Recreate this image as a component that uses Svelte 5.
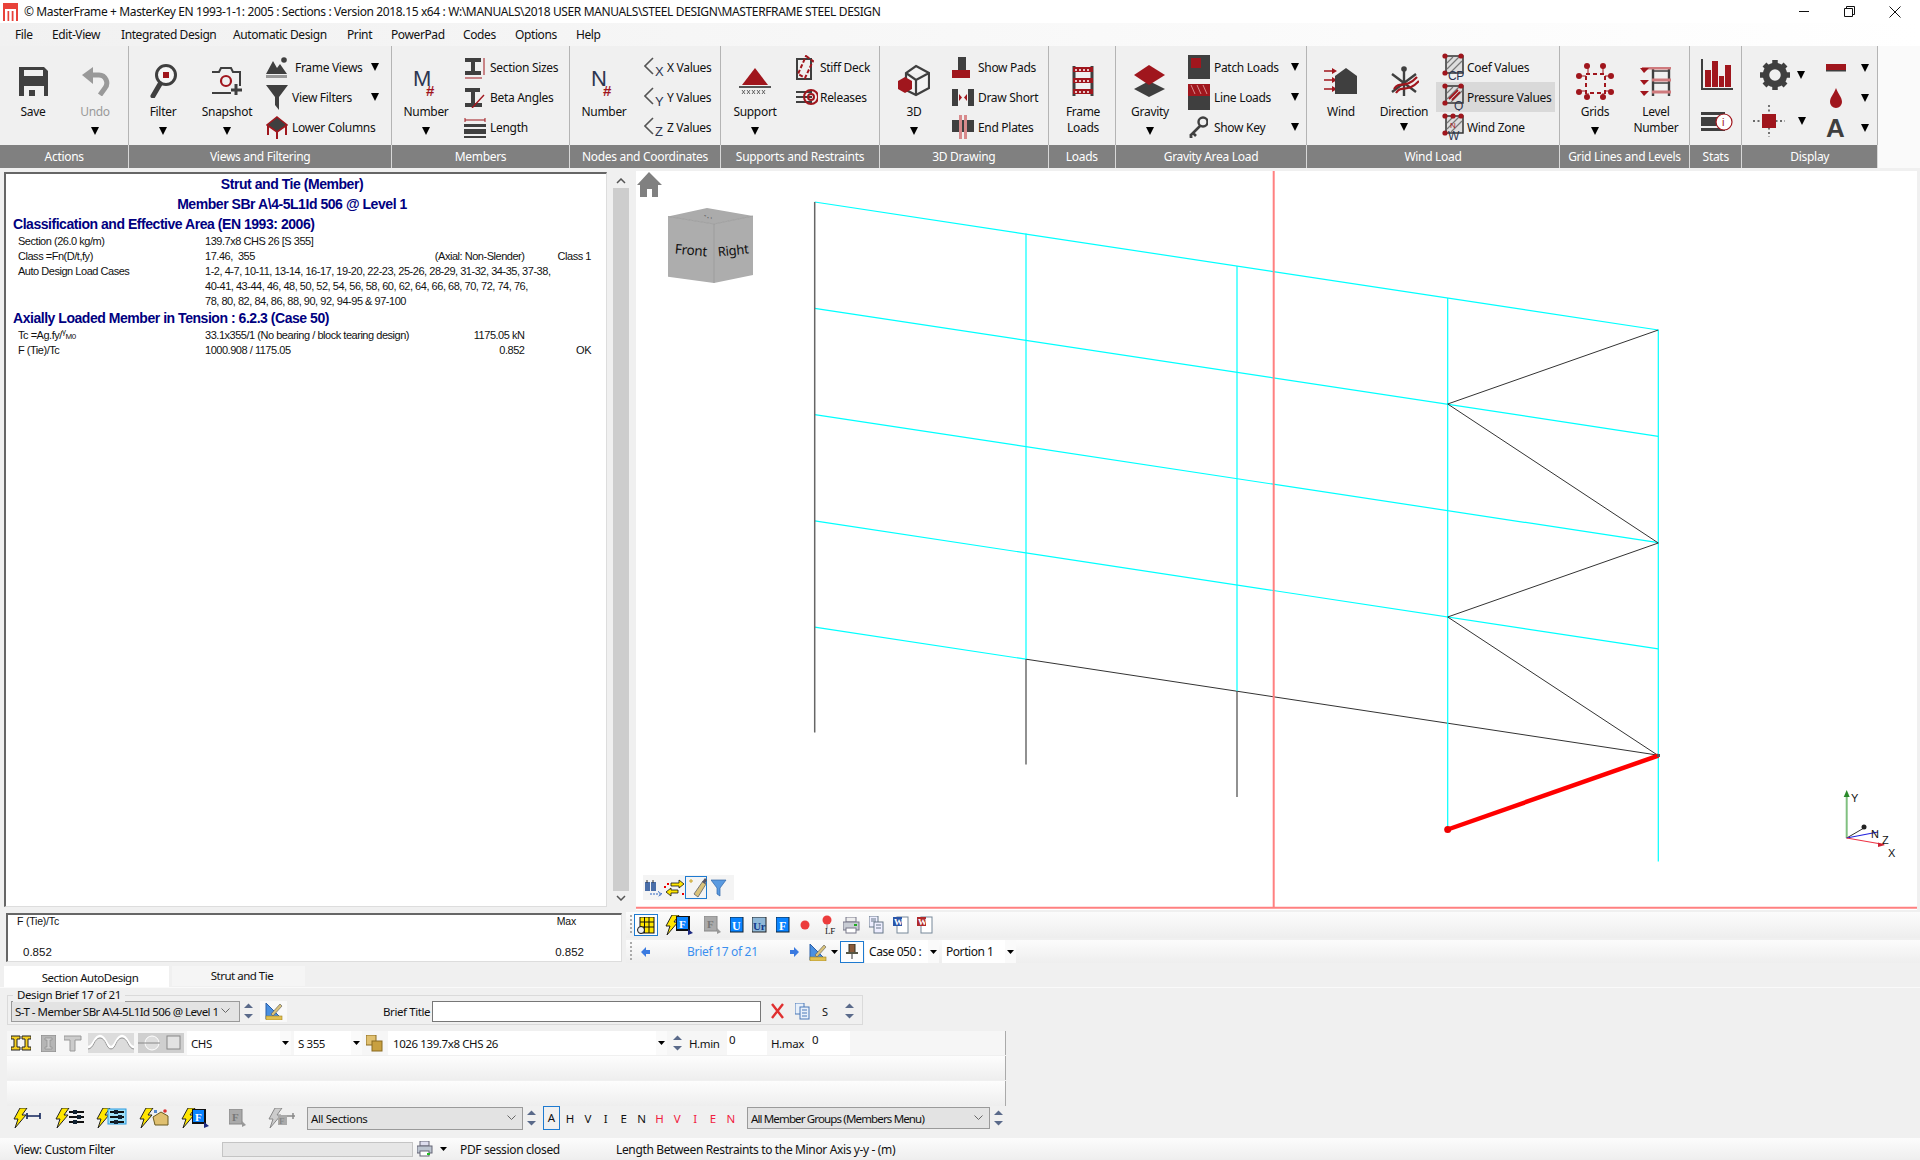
<script>
const R='#a0161d', D='#3f3f3f', F='font-family="Liberation Sans" ';
const bolt=(x=0,y=0)=>`<polygon transform="translate(${x} ${y})" points="8,0 15,0 10,7 14,7 3,20 6,11 2,11" fill="#ffe600" stroke="#222" stroke-width="1"/>`;
const hatch=`<rect x="4" y="3" width="17" height="17" fill="#ddd" stroke="#333" stroke-width="1.5"/><path d="M5 10L11 4M5 16L17 4M9 19L20 8" stroke="#777" stroke-width="1.2"/>`;
const dots=`<circle cx="3" cy="3" r="2.6" fill="${R}"/><circle cx="19" cy="3" r="2.6" fill="${R}"/><circle cx="3" cy="20" r="2.6" fill="${R}"/>`;
const axis=(l)=>`<path d="M9 2L1 10L9 18" fill="none" stroke="#555" stroke-width="1.6"/><text x="11" y="20" ${F}font-size="13" fill="#2d3650">${l}</text>`;
const ICONS={
save:`<path d="M0 0H25L29 4V29H0Z" fill="#404040"/><rect x="5" y="3" width="19" height="6" fill="#f0f0f0"/><rect x="5" y="19" width="20" height="10" fill="#f0f0f0"/><rect x="10" y="23" width="6" height="6" fill="#404040"/>`,
undo:`<path d="M11 8H18a8 8 0 0 1 6 13L19 28" fill="none" stroke="#999" stroke-width="5"/><path d="M12 0V17L1 8Z" fill="#999"/>`,
filter:`<circle cx="17" cy="11" r="9.5" fill="#f6f6f6" stroke="${D}" stroke-width="3"/><rect x="14" y="8" width="6" height="6" fill="${R}"/><path d="M11 20L4 32" stroke="${D}" stroke-width="5" stroke-linecap="round"/>`,
snapshot:`<path d="M1 5H8L10 1H20L22 5H29V19M20 26H1Z" fill="none" stroke="${D}" stroke-width="2"/><circle cx="15" cy="14" r="5" fill="none" stroke="${R}" stroke-width="2.2"/><path d="M25 17V28M20 23H31" stroke="${D}" stroke-width="3"/>`,
frame:`<path d="M0 17L7 4L11 11L14 7L21 17Z" fill="${D}"/><circle cx="18" cy="3" r="2.8" fill="${D}"/><rect y="18" width="21" height="3" fill="#999"/>`,
funnel:`<polygon points="0,0 22,0 13,12 13,25 9,20 9,12" fill="${D}"/>`,
lower:`<polygon points="11,1 21,9 11,16 1,9" fill="${D}" stroke="${R}" stroke-width="1.6"/><path d="M2 10V19M20 10V19M11 16V23" stroke="${R}" stroke-width="2"/>`,
mnum:`<text x="1" y="21" ${F}font-size="22" fill="#2d3650">M</text><text x="14" y="31" ${F}font-size="15" font-weight="700" fill="${R}">#</text>`,
nnum:`<text x="1" y="21" ${F}font-size="22" fill="#2d3650">N</text><text x="13" y="31" ${F}font-size="15" font-weight="700" fill="${R}">#</text>`,
sect:`<path d="M1 3H17V7H11V16H17V20H1V16H7V7H1Z" fill="${D}"/><path d="M20 3V20M1 23H18" stroke="${R}" stroke-width="1"/>`,
beta:`<path d="M1 1H16V5H11V16H18V20H1V16H7V5H1Z" fill="${D}"/><path d="M8 21L20 8" stroke="${R}" stroke-width="1.4"/>`,
len:`<path d="M1 3H21M1 1V5M21 1V5" stroke="${R}" stroke-width="1"/><rect y="7" width="22" height="3" fill="${D}"/><rect y="12" width="22" height="5" fill="${D}"/><rect y="19" width="22" height="2" fill="${D}"/>`,
xv:axis('X'),yv:axis('Y'),zv:axis('Z'),
support:`<polygon points="16,0 29,17 3,17" fill="${R}"/><rect y="18" width="32" height="2" fill="#555"/><path d="M3 22l3 4m0-4l-3 4M8 22l3 4m0-4l-3 4M13 22l3 4m0-4l-3 4M18 22l3 4m0-4l-3 4M23 22l3 4m0-4l-3 4" stroke="#555" stroke-width=".9"/>`,
stiff:`<rect x="1" y="4" width="14" height="20" fill="none" stroke="${D}" stroke-width="2"/><path d="M10 1L17 6L9 23L2 19Z" fill="none" stroke="${R}" stroke-width="2" stroke-dasharray="4 2"/>`,
rel:`<path d="M0 5H16M0 10H16M0 15H16" stroke="${D}" stroke-width="2"/><circle cx="15" cy="10" r="7" fill="none" stroke="${R}" stroke-width="2"/><circle cx="15" cy="10" r="3" fill="none" stroke="${R}" stroke-width="2"/>`,
cube:`<path d="M18 2L31 9V24L18 31L8 26V9Z M8 9L18 16L31 9M18 16V31" fill="#f4f4f4" stroke="${D}" stroke-width="2.2"/><polygon points="7,13 14,17 14,25 7,29 0,25 0,17" fill="${R}"/>`,
pads:`<rect x="6" y="0" width="8" height="13" fill="${D}"/><rect y="13" width="18" height="8" fill="${R}"/>`,
short:`<rect y="0" width="6" height="17" fill="${D}"/><rect x="16" y="0" width="6" height="17" fill="${D}"/><path d="M10 8.5L7 5V12ZM12 8.5L15 5V12Z" fill="${R}"/>`,
plates:`<rect y="5" width="22" height="12" fill="${D}"/><rect x="7" y="0" width="3" height="24" fill="#d88a8c"/><rect x="12" y="0" width="3" height="24" fill="#d88a8c"/>`,
floads:`<path d="M2 0V30M20 0V30" stroke="${D}" stroke-width="3"/><rect x="1" y="1" width="20" height="5" fill="${R}"/><rect x="1" y="12" width="20" height="5" fill="${R}"/><rect x="1" y="23" width="20" height="5" fill="${R}"/><path d="M3 4H19M3 15H19M3 26H19" stroke="#fff" stroke-width="1.4" stroke-dasharray="2 2"/>`,
gravity:`<polygon points="15,16 31,24 15,32 0,24" fill="${D}"/><polygon points="15,0 31,10 15,20 0,10" fill="${R}"/>`,
patch:`<rect width="22" height="24" fill="${D}"/><rect x="3" y="3" width="10" height="10" fill="${R}"/>`,
lineload:`<rect width="22" height="26" fill="${D}"/><rect width="22" height="12" fill="${R}"/><path d="M3 1l4 9M9 1l4 9M15 1l4 9" stroke="#d88a8c"/>`,
key:`<circle cx="15" cy="6" r="4.5" fill="none" stroke="${D}" stroke-width="2.4"/><path d="M12 10L2 20M5 17L8 20M2 20L4 22" stroke="${D}" stroke-width="2.6"/>`,
wind:`<path d="M0 3H9M0 12H9M0 21H9" stroke="${R}" stroke-width="1.6"/><path d="M8 0L13 3L8 6ZM8 9L13 12L8 15ZM8 18L13 21L8 24Z" fill="${R}"/><path d="M11 8L22 0L33 8V26H11Z" fill="${D}" transform="translate(0 0)"/>`,
dirn:`<path d="M15 2V30M3 8L27 26M27 8L3 26" stroke="${D}" stroke-width="2.4"/><circle cx="15" cy="3" r="2.8" fill="${D}"/><path d="M5 23C11 14 16 24 28 11M7 27C13 18 18 28 30 15" fill="none" stroke="${R}" stroke-width="2.2"/>`,
cp:hatch+dots+`<text x="6" y="27" ${F}font-size="12" fill="#2d3650">CP</text>`,
q:hatch+dots+`<path d="M7 16L16 7M10 17L18 9" stroke="${R}" stroke-width="1.8"/><text x="12" y="27" ${F}font-size="12" fill="#2d3650">Q</text>`,
wz:hatch+dots+`<circle cx="11" cy="3" r="2.6" fill="${R}"/><text x="8" y="15" ${F}font-size="8" fill="${R}">N</text><text x="6" y="27" ${F}font-size="12" fill="#2d3650">W</text>`,
grids:`<path d="M12 4V33M27 4V33M1 13H37M1 28H37" stroke="${R}" stroke-width="1"/><rect x="10" y="11" width="19" height="19" fill="#f0f0f0" stroke="${R}" stroke-width="2" stroke-dasharray="4 3"/><g fill="${R}"><circle cx="11" cy="3" r="3"/><circle cx="27" cy="3" r="3"/><circle cx="3" cy="13" r="3"/><circle cx="35" cy="13" r="3"/><circle cx="3" cy="29" r="3"/><circle cx="35" cy="29" r="3"/><circle cx="11" cy="34" r="3"/><circle cx="27" cy="34" r="3"/></g>`,
level:`<path d="M13 1V29M29 1V29" stroke="${D}" stroke-width="2.4"/><path d="M2 1H31M12 13H31M12 25H31" stroke="#cf7a7d" stroke-width="3"/><path d="M12 4H29M12 16H29" stroke="${D}" stroke-width="1.4"/><path d="M0 1L9 1L4 6ZM0 13H9L4 18ZM0 24H9L4 29Z" fill="${R}"/>`,
bars:`<path d="M1 0V30H32" fill="none" stroke="${D}" stroke-width="2"/><g fill="${R}"><rect x="4" y="11" width="6" height="17"/><rect x="11" y="2" width="6" height="26"/><rect x="18" y="17" width="5" height="11"/><rect x="24" y="6" width="6" height="22"/></g>`,
info:`<rect y="1" width="24" height="3" fill="${D}"/><rect y="6" width="24" height="9" fill="${D}"/><rect y="17" width="24" height="3" fill="${D}"/><circle cx="23" cy="11" r="8" fill="#fff" stroke="${R}" stroke-width="1.2"/><text x="21" y="15" ${F}font-size="11" fill="${R}">i</text>`,
gear:`<circle cx="15" cy="15" r="9" fill="none" stroke="${D}" stroke-width="6.5"/><path d="M15 0V30M0 15H30M4.500 4.500L25.500 25.500M25.500 4.500L4.500 25.500" stroke="${D}" stroke-width="5.500" stroke-dasharray="4.500 21 4.500 0"/>`,
dash:`<rect y="0" width="20" height="7" fill="${R}"/><rect y="6" width="20" height="1.500" fill="${D}"/>`,
drop:`<path d="M6 0C8 6 12 9 12 14A6 6 0 0 1 0 14C0 9 4 6 6 0Z" fill="${R}"/>`,
move:`<path d="M16 0V32M0 16H32" stroke="${D}" stroke-width="1.4" stroke-dasharray="2 2.500"/><rect x="9" y="9" width="14" height="14" fill="${R}"/>`,
bigA:`<text x="0" y="19" ${F}font-size="26" font-weight="700" fill="${D}">A</text>`,
home:`<path d="M12 0L25 13H21V25H15V17H10V25H3V13H0Z" fill="#808080"/>`,
binoc:`<rect x="1" y="4" width="5" height="9" fill="#4a6ea8"/><rect x="7" y="4" width="5" height="9" fill="#4a6ea8"/><path d="M3 2V5M9 2V5" stroke="#333"/><path d="M6 16H17M14 13.500L18 16L14 18.500" stroke="#2e64c0" stroke-dasharray="2 1" fill="none"/>`,
swap:`<path d="M7 5H15V2L20 6L15 10V8H7Z" fill="#ffe600" stroke="#111" stroke-width=".8"/><path d="M14 12H7V10L2 14L7 18V15H14Z" fill="#ffe600" stroke="#111" stroke-width=".8"/><g fill="#e00"><rect x="0" y="8" width="2" height="2"/><rect x="3" y="5" width="2" height="2"/><rect x="18" y="15" width="2" height="2"/></g>`,
brush:`<path d="M8 17L17 4L20 7L12 20Z" fill="#d9c27a" stroke="#777"/><path d="M16 5L19 1L21 3L19 7Z" fill="#556"/><path d="M3 4H7M5 2V6" stroke="#c9a21e"/>`,
fnl:`<polygon points="0,1 15,1 9,9 9,17 6,15 6,9" fill="#5a9ae0" stroke="#2e64a8" stroke-width=".7"/>`,
grid:`<rect x="3" y="0" width="14" height="16" fill="#ffe600" stroke="#111" stroke-width="1"/><path d="M3 5H17M3 10H17M7.500 0V16M12 0V16" stroke="#111"/><circle cx="4" cy="13" r="3.500" fill="#eee" stroke="#111"/>`,
boltf:bolt(0,0)+`<rect x="12" y="1" width="14" height="15" fill="#111"/><rect x="13" y="2" width="11" height="12" fill="#0a84ff"/><text x="15" y="12.500" font-family="Liberation Serif" font-weight="700" font-size="11" fill="#fff">F</text><polygon points="24,14 29,18 24,20" fill="#1d2a80"/>`,
fgray:`<rect width="13" height="15" fill="#aaa" stroke="#888"/><text x="3" y="12" font-family="Liberation Serif" font-weight="700" font-size="11" fill="#777">F</text><polygon points="13,12 17,16 13,18" fill="#999"/>`,
u:`<rect width="13" height="15" fill="#0a84ff" stroke="#123"/><text x="2" y="12.500" font-family="Liberation Serif" font-weight="700" font-size="12" fill="#fff">U</text>`,
ur:`<rect width="14" height="15" fill="#8fb8d8" stroke="#222"/><text x="1" y="12.500" font-family="Liberation Serif" font-weight="700" font-size="11" fill="#123a8a">Ur</text>`,
f:`<rect width="13" height="15" fill="#0a84ff" stroke="#123"/><text x="3" y="12.500" font-family="Liberation Serif" font-weight="700" font-size="12" fill="#fff">F</text>`,
dot:`<circle cx="5" cy="5" r="4.500" fill="#ec3c3c"/>`,
pinlf:`<circle cx="5" cy="5" r="4.500" fill="#ec3c3c"/><path d="M5 9V13" stroke="#888"/><text x="3" y="18.500" font-family="Liberation Serif" font-size="9" fill="#111">LF</text>`,
print:`<rect x="3" y="0" width="10" height="5" fill="#eee" stroke="#778"/><rect x="0" y="5" width="16" height="8" fill="#c8ccd4" stroke="#778"/><rect x="3" y="11" width="10" height="5" fill="#fff" stroke="#778"/><rect x="11" y="7" width="3" height="2" fill="#2a2"/>`,
copies:`<rect x="0" y="0" width="9" height="11" fill="#eef" stroke="#678"/><rect x="5" y="6" width="9" height="11" fill="#eef" stroke="#678"/><path d="M2 3H7M2 5H7M7 9H12M7 12H12" stroke="#678"/>`,
wordb:`<rect x="4" y="1" width="11" height="16" fill="#fff" stroke="#789"/><rect x="0" y="1" width="9" height="9" fill="#2a55a8"/><text x="1" y="9" font-family="Liberation Serif" font-weight="700" font-size="9" fill="#fff">W</text>`,
wordr:`<rect x="4" y="1" width="11" height="16" fill="#fff" stroke="#789"/><rect x="0" y="1" width="9" height="9" fill="#b02a2a"/><text x="1" y="9" font-family="Liberation Serif" font-weight="700" font-size="9" fill="#fff">W</text>`,
la:`<polygon points="0,5 5,0 5,3 9,3 9,7 5,7 5,10" fill="#3a7ae0"/>`,
ra:`<polygon points="9,5 4,0 4,3 0,3 0,7 4,7 4,10" fill="#3a7ae0"/>`,
ruler:`<polygon points="1,1 1,17 17,17" fill="#4a90e0" stroke="#2a5ea8"/><rect x="1" y="14" width="16" height="4" fill="#e0c050" stroke="#a08020" stroke-width=".6"/><path d="M6 12L15 2L17 4L8 14Z" fill="#d9c27a" stroke="#555" stroke-width=".6"/>`,
pin:`<rect x="3" y="0" width="6" height="9" fill="#8a5a3a" stroke="#332"/><rect x="0" y="8" width="12" height="2" fill="#554"/><path d="M6 10V15" stroke="#333"/>`,
x:`<path d="M1 1L12 15M12 1L1 15" stroke="#e03030" stroke-width="2.400"/>`,
copy:`<rect x="0" y="0" width="9" height="11" fill="#e8f0fa" stroke="#4a78b8"/><rect x="5" y="4" width="9" height="12" fill="#e8f0fa" stroke="#4a78b8"/><path d="M7 7H12M7 10H12M7 13H12" stroke="#4a78b8"/>`,
ii:`<g fill="#f7d020" stroke="#222" stroke-width="1"><path d="M0 1H9V4H6V12H9V15H0V12H3V4H0Z"/><path d="M11 1H20V4H17V12H20V15H11V12H14V4H11Z"/></g>`,
ibox:`<rect width="15" height="17" fill="#b5b5b5" stroke="#888"/><path d="M4 3H11V5H9V12H11V14H4V12H6V5H4Z" fill="#ccc" stroke="#888" stroke-width=".6"/>`,
tbox:`<path d="M0 1H17V5H11V16H6V5H0Z" fill="#ccc" stroke="#999"/>`,
wave:`<rect width="46" height="20" fill="#dcdcdc"/><path d="M0 14C6 14 6 3 12 3C18 3 18 14 23 14C28 14 28 3 34 3C40 3 40 14 46 14" fill="none" stroke="#fff" stroke-width="2.400"/><path d="M0 16C6 16 6 5 12 5C18 5 18 16 23 16C28 16 28 5 34 5C40 5 40 16 46 16" fill="none" stroke="#999" stroke-width="1"/>`,
circbox:`<rect width="46" height="20" fill="#cfcfcf"/><circle cx="14" cy="10" r="7" fill="#ddd" stroke="#fff"/><path d="M0 10H22" stroke="#888"/><rect x="29" y="3" width="13" height="13" fill="#e2e2e2" stroke="#888"/>`,
stack:`<rect x="0" y="0" width="10" height="10" fill="#e0c070" stroke="#8a6a20"/><rect x="6" y="6" width="10" height="10" fill="#c8a040" stroke="#8a6a20"/>`,
bl1:bolt(0,0)+`<path d="M15 8H28M15 5V11M28 5V11" stroke="#11235a" stroke-width="1.600"/>`,
bl2:bolt(0,0)+`<path d="M15 4H30M15 9H30M15 14H30" stroke="#111" stroke-width="1.800"/><rect x="19" y="2" width="4" height="4" fill="#123"/><rect x="23" y="7" width="4" height="4" fill="#123"/><rect x="19" y="12" width="4" height="4" fill="#123"/>`,
bl3:bolt(0,0)+`<rect x="13" y="1" width="18" height="15" fill="#9fe0f8" stroke="#2a9adf"/><path d="M15 4H29M15 9H29M15 14H29" stroke="#111" stroke-width="1.800"/><rect x="19" y="2" width="4" height="4" fill="#123"/><rect x="23" y="7" width="4" height="4" fill="#123"/><rect x="19" y="12" width="4" height="4" fill="#123"/>`,
bl4:bolt(0,0)+`<path d="M15 9L23 4L30 8V17H17Z" fill="#e0c070" stroke="#6a5a20"/><circle cx="27" cy="3" r="1.800" fill="#d33"/><rect x="16" y="2" width="3" height="3" fill="#58c"/>`,
gbolt:`<polygon points="8,0 15,0 10,7 14,7 3,20 6,11 2,11" fill="#ccc" stroke="#888"/><rect x="11" y="7" width="9" height="10" fill="#aaa"/><text x="12" y="16" font-family="Liberation Serif" font-weight="700" font-size="9" fill="#888">F</text><path d="M20 8H28M26 5V11" stroke="#888" stroke-width="1.500"/>`,
printg:`<rect x="3" y="0" width="9" height="5" fill="#dde" stroke="#667"/><rect x="0" y="5" width="15" height="7" fill="#bcc4d0" stroke="#667"/><rect x="3" y="10" width="9" height="5" fill="#fff" stroke="#667"/><rect x="10" y="12" width="3" height="2" fill="#2b2"/>`
};
const flow=(items,start)=>{let p=start;return items.map(i=>{const o={...i,ml:Math.round((i.x-p)*100)/100};p=i.x+i.w;return o;});};
const big=(label,icon,w,h,cw,ml=0,arrow=false,up=false)=>({big:true,label,icon,w,h,cw,ml,arrow,up});
const r=(t,i,iw,ih,extra={})=>({t,i,iw,ih,...extra});
const groups=[
{n:'Actions',w:129.4,it:[big(['Save'],'save',29,29,66),big(['Undo'],'undo',29,29,58,0,true)]},
{n:'Views and Filtering',w:262.6,it:[big(['Filter'],'filter',28,34,50,8.6,true),big(['Snapshot'],'snapshot',31,28,78,0,true),
 {cw:116,slot:26,rows:[r('Frame Views','frame',22,21,{a:1,tx:3}),r('View Filters','funnel',22,25,{a:1}),r('Lower Columns','lower',22,23)]}]},
{n:'Members',w:178,it:[big(['Number'],'mnum',28,33,52,8,true),{ml:12,cw:100,slot:26,rows:[r('Section Sizes','sect',21,24),r('Beta Angles','beta',21,21),r('Length','len',22,21)]}]},
{n:'Nodes and Coordinates',w:151,it:[big(['Number'],'nnum',28,33,52,8),{ml:14,cw:75,slot:23,rows:[r('X Values','xv',22,22),r('Y Values','yv',22,22),r('Z Values','zv',22,22)]}]},
{n:'Supports and Restraints',w:159,it:[big(['Support'],'support',32,26,52,8,true),{ml:15,cw:70,slot:24,rows:[r('Stiff Deck','stiff',18,25),r('Releases','rel',22,20)]}]},
{n:'3D Drawing',w:168.6,it:[big(['3D'],'cube',32,34,52,8,true),{ml:12,cw:90,slot:26,rows:[r('Show Pads','pads',18,21),r('Draw Short','short',22,17),r('End Plates','plates',22,24)]}]},
{n:'Loads',w:67.4,it:[big(['Frame','Loads'],'floads',22,30,52,8.4)]},
{n:'Gravity Area Load',w:191,it:[big(['Gravity'],'gravity',31,32,52,8,true),{ml:12,cw:114.5,slot:26,rows:[r('Patch Loads','patch',22,24,{a:1}),r('Line Loads','lineload',22,26,{a:1}),r('Show Key','key',20,22,{a:1})]}]},
{n:'Wind Load',w:253,it:[big(['Wind'],'wind',33,26,52,8),big(['Direction'],'dirn',30,31,64,5,true,true),{cw:119,slot:31,pad:6,rows:[r('Coef Values','cp',22,28),r('Pressure Values','q',22,28,{hl:1}),r('Wind Zone','wz',22,28)]}]},
{n:'Grid Lines and Levels',w:130,it:[big(['Grids'],'grids',38,37,52,9,true),big(['Level','Number'],'level',31,29,52,9)]},
];
const row1=flow([{i:'grip',x:630,w:3,h:20},{i:'grid',x:635,w:24,h:17,ib:18,box:1},{i:'boltf',x:665,w:30,h:21},{i:'fgray',x:705,w:18,h:19},{i:'u',x:731,w:14,h:16},{i:'ur',x:753,w:15,h:16},{i:'f',x:777,w:14,h:16},{i:'dot',x:801,w:10,h:10},{i:'pinlf',x:823,w:15,h:20},{i:'print',x:844,w:17,h:17},{i:'copies',x:870,w:15,h:18},{i:'wordb',x:894,w:16,h:18},{i:'wordr',x:918,w:16,h:18}],626);
const letters=['H','V','I','E','N'];
const report=[
 ['Section (26.0 kg/m)','139.7x8 CHS 26 [S 355]','',''],
 ['Class =Fn(D/t,fy)','17.46,  355','(Axial: Non-Slender)','Class 1'],
 ['Auto Design Load Cases','1-2, 4-7, 10-11, 13-14, 16-17, 19-20, 22-23, 25-26, 28-29, 31-32, 34-35, 37-38,'],
 ['','40-41, 43-44, 46, 48, 50, 52, 54, 56, 58, 60, 62, 64, 66, 68, 70, 72, 74, 76,'],
 ['','78, 80, 82, 84, 86, 88, 90, 92, 94-95 & 97-100'],
];
const cx=[814.7,1026,1237,1447.7,1658.3];
const bY=(lvl,c)=>202+lvl*106.3+c*32;
</script>

{#snippet ic(n,w,h)}<svg class="ic" width={w} height={h} viewBox="0 0 {w} {h}">{@html ICONS[n]}</svg>{/snippet}
{#snippet ar()}<svg class="ic" width="8" height="8" viewBox="0 0 8 8"><polygon points="0,0 8,0 4,8" fill="#000"/></svg>{/snippet}
{#snippet dd()}<svg class="ic" width="7" height="4" viewBox="0 0 7 4"><polygon points="0,0 7,0 3.500,4" fill="#000"/></svg>{/snippet}
{#snippet spin()}<svg class="ic" width="11" height="20" viewBox="0 0 11 20"><path d="M1 7L5.500 2.500L10 7Z" fill="#5a6a8a"/><path d="M1 13L5.500 17.500L10 13Z" fill="#5a6a8a"/></svg>{/snippet}
{#snippet chev()}<svg class="ic chev" width="9" height="6" viewBox="0 0 9 6"><path d="M.5 .5L4.500 4.500L8.500 .5" fill="none" stroke="#666" stroke-width="1"/></svg>{/snippet}

<div class="app">
  <div class="title">
    <svg class="logo" width="15" height="18" viewBox="0 0 15 18"><rect width="15" height="18" fill="#e8423a"/><rect x="2" y="6" width="11" height="2" fill="#fff"/><rect x="2" y="8" width="2.500" height="10" fill="#fff"/><rect x="6.200" y="8" width="2.500" height="10" fill="#fff"/><rect x="10.500" y="8" width="2.500" height="10" fill="#fff"/></svg>
    <span class="ttext">© MasterFrame + MasterKey EN 1993-1-1: 2005 : Sections : Version 2018.15 x64 : W:\MANUALS\2018 USER MANUALS\STEEL DESIGN\MASTERFRAME STEEL DESIGN</span>
    <div class="winbtns">
      <svg width="11" height="11" viewBox="0 0 11 11"><path d="M0 5.500H10" stroke="#111"/></svg>
      <svg width="11" height="11" viewBox="0 0 11 11"><path d="M.5 2.500H8.500V10.500H.5ZM2.500 2.500V.5H10.500V8.500H8.500" fill="none" stroke="#111"/></svg>
      <svg width="12" height="12" viewBox="0 0 12 12"><path d="M.5 .5L11.500 11.500M11.500 .5L.5 11.500" stroke="#111"/></svg>
    </div>
  </div>
  <div class="menu">
    <span class="m1">File</span><span class="m2">Edit-View</span><span class="m3">Integrated Design</span><span class="m4">Automatic Design</span><span class="m5">Print</span><span class="m6">PowerPad</span><span class="m7">Codes</span><span class="m8">Options</span><span class="m9">Help</span>
  </div>
  <div class="ribbon">
    {#each groups as g}
      <div class="grp" style="width:{g.w}px">
        <div class="tools">
          {#each g.it as it}
            {#if it.big}
              <div class="big" style="width:{it.cw}px;margin-left:{it.ml}px">
                <div class="bigicon">{@render ic(it.icon,it.w,it.h)}</div>
                {#each it.label as l}<div class="bl" class:dim={l==='Undo'}>{l}</div>{/each}
                {#if it.arrow}<div class="bar" class:up={it.up}>{@render ar()}</div>{/if}
              </div>
            {:else}
              <div class="col" style="width:{it.cw}px;margin-left:{it.ml||0}px">
                {#each it.rows as ro}
                  <div class="row" class:hl={ro.hl} style="padding-left:{it.pad||0}px">
                    <div class="slot" style="width:{it.slot-(it.pad||0)}px">{@render ic(ro.i,ro.iw,ro.ih)}</div>
                    <span class="rt" style="padding-left:{ro.tx||0}px">{ro.t}</span>
                    {#if ro.a}<div class="ra">{@render ar()}</div>{/if}
                  </div>
                {/each}
              </div>
            {/if}
          {/each}
        </div>
        <div class="cap">{g.n}</div>
      </div>
    {/each}
    <div class="grp stats">
      <div class="tools statcol">{@render ic('bars',33,32)}{@render ic('info',32,20)}</div>
      <div class="cap">Stats</div>
    </div>
    <div class="grp disp">
      <div class="tools dtools">
        <div class="dleft">
          <div class="d1">{@render ic('gear',30,30)}{@render ar()}</div>
          <div class="d2">{@render ic('move',32,32)}{@render ar()}</div>
        </div>
        <div class="dright">
          <div class="dr"><div class="dslot">{@render ic('dash',20,8)}</div>{@render ar()}</div>
          <div class="dr"><div class="dslot">{@render ic('drop',12,20)}</div>{@render ar()}</div>
          <div class="dr"><div class="dslot">{@render ic('bigA',20,20)}</div>{@render ar()}</div>
        </div>
      </div>
      <div class="cap">Display</div>
    </div>
  </div>
  <div class="strip168"></div>

  <div class="main">
    <div class="report">
      <div class="h1">Strut and Tie (Member)</div>
      <div class="h1">Member SBr A\4-5L1Id 506 @ Level 1</div>
      <div class="h2">Classification and Effective Area (EN 1993: 2006)</div>
      {#each report as rw}
        <div class="rr" class:wide={rw.length===2}>
          <span>{rw[0]}</span><span>{rw[1]}</span>
          {#if rw.length>2}<span class="rg">{rw[2]}</span><span class="rg">{rw[3]}</span>{/if}
        </div>
      {/each}
      <div class="h2 hd">Axially Loaded Member in Tension : 6.2.3 (Case 50)</div>
      <div class="rr"><span>Tc =Ag.fy/<sup>γ</sup><small>M0</small></span><span>33.1x355/1 (No bearing / block tearing design)</span><span class="rg">1175.05 kN</span><span></span></div>
      <div class="rr"><span>F (Tie)/Tc</span><span>1000.908 / 1175.05</span><span class="rg">0.852</span><span class="rg">OK</span></div>
    </div>
    <div class="vscroll">
      <svg width="10" height="6" viewBox="0 0 10 6"><path d="M1 5L5 1L9 5" fill="none" stroke="#555" stroke-width="1.500"/></svg>
      <div class="thumb"></div>
      <svg width="10" height="6" viewBox="0 0 10 6"><path d="M1 1L5 5L9 1" fill="none" stroke="#555" stroke-width="1.500"/></svg>
    </div>
    <div class="canvas">
      <svg class="draw" width="1281" height="739" viewBox="636 171 1281 739">
        <rect x="636" y="171" width="1281" height="739" fill="#fff"/>
        {#each [0,1,2,3] as l}
          <line x1={cx[0]} y1={bY(l,0)} x2={cx[4]} y2={bY(l,4)} stroke="#00ffff" stroke-width="1.200"/>
        {/each}
        <line x1={cx[0]} y1={bY(4,0)} x2={cx[1]} y2={bY(4,1)} stroke="#00ffff" stroke-width="1.200"/>
        <line x1={cx[1]} y1={bY(4,1)} x2={cx[4]} y2={bY(4,4)} stroke="#333" stroke-width="1"/>
        <line x1={cx[0]} y1="202" x2={cx[0]} y2="732.500" stroke="#666" stroke-width="1.500"/>
        <line x1={cx[1]} y1="233.500" x2={cx[1]} y2="659" stroke="#00ffff" stroke-width="1.200"/>
        <line x1={cx[1]} y1="659" x2={cx[1]} y2="764.500" stroke="#555" stroke-width="1.300"/>
        <line x1={cx[2]} y1="266" x2={cx[2]} y2="691" stroke="#00ffff" stroke-width="1.200"/>
        <line x1={cx[2]} y1="691" x2={cx[2]} y2="797" stroke="#555" stroke-width="1.300"/>
        <line x1={cx[3]} y1="298" x2={cx[3]} y2="829.500" stroke="#00ffff" stroke-width="1.200"/>
        <line x1={cx[4]} y1="330" x2={cx[4]} y2="861.500" stroke="#00ffff" stroke-width="1.200"/>
        <polyline points="{cx[4]},330 {cx[3]},404 {cx[4]},543 {cx[3]},617 {cx[4]},755.600" fill="none" stroke="#333" stroke-width="1"/>
        <line x1={cx[4]} y1="755.600" x2={cx[3]} y2="829.500" stroke="#ff0000" stroke-width="4.500"/>
        <circle cx={cx[3]} cy="829.500" r="3.500" fill="#ee0000"/>
        <rect x="1657" y="754" width="3" height="3" fill="#555"/>
        <line x1="1273.700" y1="171" x2="1273.700" y2="908" stroke="#ff8080" stroke-width="2"/>
        <line x1="636" y1="907.800" x2="1917" y2="907.800" stroke="#ff8080" stroke-width="2"/>

        <g transform="translate(637 172)">{@html ICONS.home}</g>

        <polygon points="668,216.500 707,208 753,216 714,224" fill="#ababab"/>
        <polygon points="668,216.500 714,224 714,283 668,276.700" fill="#adadad"/>
        <polygon points="714,224 753,216 753,275 714,283" fill="#adadad"/>
        <path d="M668 216.500L714 224L753 216M714 224V283" fill="none" stroke="#999" stroke-width=".8"/>
        <text x="691" y="255" font-family="Noto Sans" font-size="13.500" text-anchor="middle" transform="rotate(5 691 250)" fill="#111">Front</text>
        <text x="733" y="255" font-family="Noto Sans" font-size="13" text-anchor="middle" transform="rotate(-6 733 250)" fill="#111">Right</text>
        <text x="708" y="218" font-family="Noto Sans" font-size="7" text-anchor="middle" fill="#222" transform="rotate(8 708 216)">- . .</text>

        <line x1="1846.700" y1="838" x2="1846.700" y2="794" stroke="#80c080" stroke-width="2"/>
        <polygon points="1846.700,790 1843.700,797 1849.700,797" fill="#2a8a2a"/>
        <line x1="1846.700" y1="838" x2="1864" y2="828" stroke="#333" stroke-width="1"/>
        <circle cx="1864" cy="827" r="2.500" fill="#222"/>
        <line x1="1846.700" y1="838" x2="1878" y2="832" stroke="#2222dd" stroke-width="1.200"/>
        <line x1="1846.700" y1="838" x2="1884" y2="844.500" stroke="#ee3344" stroke-width="1.200"/>
        <polygon points="1885,845 1878,842.500 1878,847" fill="#cc2233"/>
        <g font-family="Liberation Sans" font-size="11" fill="#111">
          <text x="1851" y="802">Y</text><text x="1871" y="838">N</text><text x="1882" y="844">Z</text><text x="1888" y="857">X</text>
        </g>
      </svg>
      <div class="ctools">
        <span class="cti">{@render ic('binoc',18,20)}</span>
        <span class="cti">{@render ic('swap',20,19)}</span>
        <span class="cti sel">{@render ic('brush',21,21)}</span>
        <span class="cti">{@render ic('fnl',16,18)}</span>
      </div>
    </div>
  </div>

  <div class="mid">
    <div class="midleft">
      <div class="chart">
        <div class="ch1"><span>F (Tie)/Tc</span><span>Max</span></div>
        <div class="ch2"><span>0.852</span><span>0.852</span></div>
      </div>
      <div class="tabs"><div class="tab on">Section AutoDesign</div><div class="tab">Strut and Tie</div></div>
    </div>
    <div class="midright">
      <div class="tb tb1">
        {#each row1 as b}
          {#if b.i==='grip'}<i class="grip" style="margin-left:{b.ml}px"></i>
          {:else if b.box}<span class="boxed" style="margin-left:{b.ml}px;width:{b.w}px">{@render ic(b.i,b.ib,b.h)}</span>
          {:else}<span class="tbi" style="margin-left:{b.ml}px">{@render ic(b.i,b.w,b.h)}</span>{/if}
        {/each}
      </div>
      <div class="tb tb2">
        <i class="grip g2"></i>
        <span class="a1">{@render ic('la',10,10)}</span>
        <span class="brief">Brief 17 of 21</span>
        <span class="a2">{@render ic('ra',10,10)}</span>
        <span class="a3">{@render ic('ruler',18,18)}</span>
        <span class="a4">{@render dd()}</span>
        <span class="boxed pinbox">{@render ic('pin',12,15)}</span>
        <span class="fld case">Case 050 :</span><span class="ddb">{@render dd()}</span>
        <span class="fld port">Portion 1</span><span class="ddb">{@render dd()}</span>
      </div>
    </div>
  </div>
  <div class="hr"></div>

  <div class="panel">
    <div class="fs">
      <span class="legend">Design Brief 17 of 21</span>
      <div class="combo c1"><span>S-T - Member SBr A\4-5L1Id 506 @ Level 1</span>{@render chev()}</div>
      <span class="sp1">{@render spin()}</span>
      <span class="rbtn">{@render ic('ruler',18,18)}</span>
      <span class="btl">Brief Title</span>
      <div class="input"></div>
      <span class="fx1">{@render ic('x',13,16)}</span>
      <span class="fx2">{@render ic('copy',15,17)}</span>
      <span class="fx3">S</span>
      <span class="fx4">{@render spin()}</span>
    </div>
    <div class="sec sec1">
      <span class="s0">{@render ic('ii',20,16)}</span>
      <span class="s1">{@render ic('ibox',15,17)}</span>
      <span class="s2">{@render ic('tbox',18,17)}</span>
      <span class="s3">{@render ic('wave',46,20)}</span>
      <span class="s4">{@render ic('circbox',46,20)}</span>
      <span class="sf s5">CHS</span><span class="sd">{@render dd()}</span>
      <span class="sf s6">S 355</span><span class="sd">{@render dd()}</span>
      <span class="s7">{@render ic('stack',17,17)}</span>
      <span class="sf s8">1026 139.7x8 CHS 26</span><span class="sd">{@render dd()}</span>
      <span class="s9">{@render spin()}</span>
      <span class="hm">H.min</span><span class="sf h0">0</span>
      <span class="hm hx">H.max</span><span class="sf h0">0</span>
    </div>
    <div class="sec sec2"></div>
    <div class="sec sec3"></div>
    <div class="btm">
      <span class="b1">{@render ic('bl1',29,21)}</span>
      <span class="b2">{@render ic('bl2',31,21)}</span>
      <span class="b3">{@render ic('bl3',32,21)}</span>
      <span class="b4">{@render ic('bl4',31,21)}</span>
      <span class="b5">{@render ic('boltf',30,21)}</span>
      <span class="b6">{@render ic('fgray',18,19)}</span>
      <span class="b7">{@render ic('gbolt',28,20)}</span>
      <div class="combo c2"><span>All Sections</span>{@render chev()}</div>
      <span class="b8">{@render spin()}</span>
      <span class="let sel">A</span>
      {#each letters as l}<span class="let">{l}</span>{/each}
      {#each letters as l}<span class="let red">{l}</span>{/each}
      <div class="combo c3"><span>All Member Groups (Members Menu)</span>{@render chev()}</div>
      <span class="b9">{@render spin()}</span>
    </div>
  </div>

  <div class="status">
    <span class="st1">View: Custom Filter</span>
    <div class="prog"></div>
    <span class="st2">{@render ic('printg',16,17)}</span>
    <span class="st3">{@render dd()}</span>
    <span class="st4">PDF session closed</span>
    <span class="st5">Length Between Restraints to the Minor Axis y-y - (m)</span>
  </div>
</div>

<style>
:global(body){margin:0;background:#f0f0f0;}
.app{width:1920px;height:1160px;overflow:hidden;background:#f0f0f0;display:flex;flex-direction:column;font-family:"Noto Sans",sans-serif;font-size:12px;letter-spacing:-.3px;color:#111;}
.ic{display:block;flex:none;}
.title{height:23px;background:#fff;display:flex;align-items:center;flex:none;}
.logo{margin-left:3px;flex:none;}
.ttext{margin-left:6px;white-space:nowrap;letter-spacing:-.375px;}
.winbtns{margin-left:auto;display:flex;align-items:center;gap:34px;margin-right:19px;}
.menu{height:23px;flex:none;display:flex;align-items:center;background:linear-gradient(90deg,#f1f1f1,#fff);letter-spacing:-.4px;}
.menu span{white-space:nowrap;}
.m1{margin-left:15px;width:37px;}.m2{width:69px;}.m3{width:112px;}.m4{width:114px;}.m5{width:44px;}.m6{width:72px;}.m7{width:52px;}.m8{width:61px;}
.ribbon{height:122px;flex:none;display:flex;background:#fafafa;}
.grp{flex:none;display:flex;flex-direction:column;box-sizing:border-box;}
.tools{height:99px;display:flex;border-right:1px solid #b4b4b4;background:#f0f0f0;box-sizing:border-box;}
.cap{height:23px;background:#808080;color:#fff;display:flex;align-items:center;justify-content:center;border-right:1px solid #d8d8d8;white-space:nowrap;box-sizing:border-box;}
.big{display:flex;flex-direction:column;align-items:center;flex:none;}
.bigicon{margin-top:12px;height:46px;display:flex;align-items:center;justify-content:center;}
.bl{height:15.500px;line-height:15.500px;white-space:nowrap;}
.dim{color:#9a9a9a;}
.bar{margin-top:7.500px;}
.bar.up{margin-top:3.500px;}
.col{flex:none;padding-top:6px;}
.row{height:30px;display:flex;align-items:center;box-sizing:border-box;}
.hl{background:#d9d9d9;}
.slot{flex:none;display:flex;align-items:center;}
.rt{white-space:nowrap;flex:none;}
.ra{width:14px;flex:none;display:flex;justify-content:center;margin-left:auto;}
.stats{width:52.500px;}
.statcol{flex-direction:column;padding:13px 0 0 11px;gap:20px;}
.disp{width:135.500px;}
.dtools{padding-left:11px;}
.dleft{width:70px;flex:none;}
.d1{display:flex;align-items:center;margin:14px 0 0 7px;gap:7px;}
.d2{display:flex;align-items:center;margin-top:14.700px;gap:13px;}
.dright{flex:none;padding-top:7px;}
.dr{height:30px;display:flex;align-items:center;}
.dslot{width:38px;display:flex;justify-content:center;padding-right:12px;box-sizing:border-box;}
.strip168{height:3px;flex:none;}
.main{height:739px;flex:none;display:flex;}
.report{margin:1px 0 0 4px;width:603px;height:735px;background:#fff;box-sizing:border-box;border-top:2px solid #666;border-left:2px solid #666;border-right:1px solid #ddd;border-bottom:1px solid #ddd;flex:none;font-family:"Liberation Sans",sans-serif;}
.h1{height:20px;line-height:20px;width:572px;text-align:center;font-weight:700;font-size:14px;color:#000080;letter-spacing:-.45px;white-space:nowrap;}
.h2{height:20px;line-height:20px;padding-left:7px;font-weight:700;font-size:14px;color:#000080;letter-spacing:-.46px;white-space:nowrap;}
.hd{height:19px;line-height:19px;}
.rr{display:grid;grid-template-columns:187px 225px 94.500px 66.500px;height:15px;line-height:15px;padding-left:12px;font-size:11px;letter-spacing:-.47px;white-space:pre;}
.rr.wide{grid-template-columns:187px 1fr;}
.rg{text-align:right;}
.rr sup{font-size:8px;line-height:0;}
.rr small{font-size:8px;}
.vscroll{margin:1px 0 0 5px;width:18px;height:735px;flex:none;display:flex;flex-direction:column;align-items:center;justify-content:space-between;padding:6px 0;box-sizing:border-box;}
.thumb{width:16px;height:703px;background:#cdcdcd;}
.canvas{margin-left:6px;width:1281px;height:739px;position:relative;flex:none;}
.draw{display:block;}
.ctools{position:absolute;left:7px;bottom:10px;width:91px;height:25px;background:#f4f4f4;display:flex;align-items:center;gap:2px;padding-left:0;box-sizing:border-box;}
.cti{display:flex;align-items:center;justify-content:center;width:19px;height:23px;}
.cti.sel{width:22px;border:1px solid #1e7ad0;box-sizing:border-box;}
.mid{height:77px;flex:none;display:flex;}
.midleft{width:626px;flex:none;}
.chart{margin:3px 0 0 6px;width:616px;height:49px;background:#fff;box-sizing:border-box;border-top:2px solid #666;border-left:2px solid #666;border-right:1px solid #ddd;border-bottom:1px solid #ddd;}
.ch1{display:flex;justify-content:space-between;font-family:"Liberation Sans";font-size:10.500px;letter-spacing:-.2px;padding:0 45px 0 9px;height:14px;line-height:13px;}
.ch2{display:flex;justify-content:space-between;font-family:"Liberation Sans";font-size:11.500px;letter-spacing:0;padding:0 37px 0 15px;margin-top:16px;line-height:14px;}
.tabs{display:flex;margin:4px 0 0 4px;gap:3px;font-size:11.500px;letter-spacing:-.5px;}
.tab{width:133px;height:20px;background:#f5f5f5;text-align:center;line-height:19px;box-sizing:border-box;padding-left:7px;}
.tab.on{width:165px;height:21px;background:#fff;line-height:24px;}
.midright{flex:1;padding-top:2px;}
.tb{display:flex;align-items:center;background:linear-gradient(#fcfcfc,#eee);}
.tb1{height:26px;}
.tb2{height:23px;margin-top:2px;}
.tbi{display:flex;}
.grip{display:block;width:2px;height:20px;background:repeating-linear-gradient(#aaa 0 2px,transparent 2px 4px);flex:none;}
.g2{margin-left:4px;}
.boxed{box-sizing:border-box;height:22px;border:1.500px solid #1e7ad0;display:flex;align-items:center;justify-content:center;flex:none;background:#fdfdfd;}
.a1{margin-left:9px;}.brief{margin-left:36px;width:67px;color:#3b8fef;white-space:nowrap;}.a2{margin-left:36px;}.a3{margin-left:9px;}.a4{margin-left:3.500px;}
.pinbox{width:24px;margin-left:2.500px;}
.fld{background:#fff;height:23px;line-height:23px;padding-left:4px;box-sizing:border-box;white-space:nowrap;letter-spacing:-.45px;}
.case{margin-left:1px;width:63px;}.port{margin-left:3px;width:63px;}
.ddb{width:11px;height:23px;display:flex;align-items:center;justify-content:center;background:#fafafa;}
.hr{height:1px;flex:none;background:#fafafa;}
.panel{height:150px;flex:none;font-size:11.500px;letter-spacing:-.4px;}
.fs{position:relative;margin:7px 0 0 7px;width:856px;height:30px;box-sizing:border-box;border:1.500px solid #dadada;display:flex;align-items:center;padding-top:2px;}
.legend{position:absolute;left:5px;top:-8px;background:#f0f0f0;padding:0 4px;line-height:14px;}
.combo{box-sizing:border-box;height:21px;background:#e3e3e3;border:1px solid #9a9a9a;display:flex;align-items:center;justify-content:space-between;padding:0 6px 0 3px;white-space:nowrap;flex:none;}
.c1{width:229px;margin-left:3px;padding-right:9px;}
.c1 span{letter-spacing:-.52px;}
.sp1{margin-left:3px;}
.rbtn{margin-left:6px;width:27px;height:21px;background:#f9f9f9;display:flex;align-items:center;justify-content:center;}
.btl{margin-left:96px;width:45px;white-space:nowrap;}
.input{margin-left:4px;width:329px;height:21px;box-sizing:border-box;background:#fff;border:1px solid #777;flex:none;}
.fx1{margin-left:10px;}.fx2{margin-left:11px;}.fx3{margin-left:12px;font-size:11px;}.fx4{margin-left:16px;}
.sec{margin-left:7px;width:999px;box-sizing:border-box;background:linear-gradient(#fdfdfd,#eee);border-right:1px solid #aaa;}
.sec1{height:24px;margin-top:6px;display:flex;align-items:center;background:#f6f6f6;}
.sec2{height:24px;margin-top:1px;}
.sec3{height:25px;margin-top:1px;}
.s0{margin-left:4px;}.s1{margin-left:10px;}.s2{margin-left:8px;}.s3{margin-left:6px;}.s4{margin-left:4px;}
.sf{background:#fff;height:24px;line-height:25px;padding-left:4px;box-sizing:border-box;white-space:nowrap;flex:none;}
.s5{margin-left:3px;width:93px;}.s6{margin-left:3px;width:57px;}.s8{margin-left:5px;width:268px;padding-left:5px;}
.sd{width:11px;height:24px;display:flex;align-items:center;justify-content:center;background:#fafafa;}
.s7{margin-left:4px;}
.s9{margin-left:4.500px;}
.hm{margin-left:6.500px;width:38px;white-space:nowrap;}
.hx{margin-left:4px;width:39px;}
.h0{width:40px;line-height:18px;padding-left:2px;}
.btm{margin:0 0 0 7px;height:24px;display:flex;align-items:center;}
.b1{margin-left:5px;}.b2{margin-left:13px;}.b3{margin-left:10px;}.b4{margin-left:11px;}.b5{margin-left:11px;}.b6{margin-left:19px;}.b7{margin-left:20px;}
.c2{margin-left:12px;width:216px;height:23px;}
.b8{margin-left:3px;}
.let{width:17.900px;text-align:center;font-size:11.500px;letter-spacing:0;flex:none;}
.let.sel{box-sizing:border-box;width:17px;height:24px;line-height:22px;border:1.500px solid #1e7ad0;margin:0 1px 0 6px;}
.red{color:#f02040;}
.c3{margin-left:7px;width:243px;height:22px;}
.c3 span{letter-spacing:-.85px;}
.b9{margin-left:3px;}
.status{height:22px;flex:none;display:flex;align-items:center;background:linear-gradient(#fcfcfc,#eee);letter-spacing:-.36px;}
.st1{margin-left:14px;width:208px;white-space:nowrap;}
.prog{width:191px;height:15px;background:#e6e6e6;border:1px solid #c4c4c4;box-sizing:border-box;flex:none;}
.st2{margin-left:4px;}.st3{margin-left:7px;}.st4{margin-left:13px;width:156px;white-space:nowrap;}.st5{white-space:nowrap;}
</style>
